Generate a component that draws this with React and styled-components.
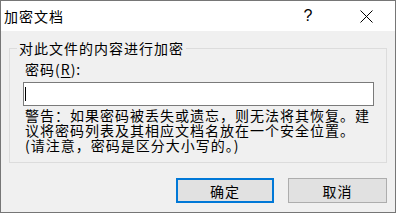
import React from 'react';
import styled, { createGlobalStyle } from 'styled-components';

const GlobalStyle = createGlobalStyle`
  html, body {
    margin: 0;
    padding: 0;
    background: #f0f0f0;
  }

  body {
    font-family: "Noto Sans CJK SC", "Noto Sans", sans-serif;
    color: #000;
  }
`;

const warningLines = [
  '警告：如果密码被丢失或遗忘，则无法将其恢复。建',
  '议将密码列表及其相应文档名放在一个安全位置。',
  '(请注意，密码是区分大小写的。)',
];

const App = () => {
  return (
    <>
      <GlobalStyle />
      <Window>
        <TitleBar>
          <Title>加密文档</Title>
          <CaptionButton>
            <HelpGlyph>?</HelpGlyph>
          </CaptionButton>
          <CaptionButton>
            <svg width="13" height="13" viewBox="0 0 13 13">
              <path d="M0.5 0.5 L12.5 12.5 M12.5 0.5 L0.5 12.5" stroke="#000" strokeWidth="1" fill="none" />
            </svg>
          </CaptionButton>
        </TitleBar>

        <GroupBox>
          <Legend>对此文件的内容进行加密</Legend>
          <FieldLabel>
            密码(<u>R</u>):
          </FieldLabel>
          <PasswordField>
            <Caret />
          </PasswordField>
          <Warning>
            {warningLines.map((line) => (
              <div key={line}>{line}</div>
            ))}
          </Warning>
        </GroupBox>

        <ButtonRow>
          <DialogButton $primary>确定</DialogButton>
          <DialogButton>取消</DialogButton>
        </ButtonRow>
      </Window>
    </>
  );
};

const Window = styled.div`
  box-sizing: border-box;
  display: flex;
  flex-direction: column;
  width: 396px;
  height: 213px;
  border: 1px solid #767676;
  background: #f0f0f0;
  overflow: hidden;
`;

const TitleBar = styled.div`
  display: flex;
  align-items: center;
  height: 30px;
  padding-left: 3px;
  background: #fff;
  flex-shrink: 0;
`;

const Title = styled.div`
  flex: 1;
  font-size: 14px;
  letter-spacing: 1px;
  line-height: 18px;
`;

const CaptionButton = styled.div`
  display: flex;
  align-items: center;
  justify-content: center;
  width: 57px;
  height: 30px;
`;

const HelpGlyph = styled.span`
  font-family: "Liberation Sans", Arial, sans-serif;
  font-size: 16px;
  line-height: 16px;
  margin-left: -3px;
`;

const GroupBox = styled.fieldset`
  margin: 8px 8px 0 8px;
  padding: 0 12px 9px 13px;
  border: 1px solid #dcdcdc;
  min-width: 0;
`;

const Legend = styled.legend`
  margin-left: -6px;
  padding: 0 2px;
  font-size: 14px;
  letter-spacing: 1px;
  line-height: 18px;
`;

const FieldLabel = styled.div`
  margin-top: 3px;
  padding-left: 2px;
  font-size: 14px;
  letter-spacing: 1px;
  line-height: 18px;

  u {
    text-underline-offset: 2px;
  }
`;

const PasswordField = styled.div`
  box-sizing: border-box;
  display: flex;
  align-items: center;
  height: 24px;
  margin-top: 4px;
  padding-left: 1px;
  border: 1px solid #7a7a7a;
  background: #fff;
`;

const Caret = styled.span`
  display: block;
  width: 1px;
  height: 14px;
  background: #000;
`;

const Warning = styled.div`
  margin-top: 2px;
  padding-left: 2px;
  font-size: 14px;
  letter-spacing: 1px;
  line-height: 15px;
  white-space: nowrap;
`;

const ButtonRow = styled.div`
  display: flex;
  justify-content: flex-end;
  gap: 14px;
  margin-top: 15px;
  padding-right: 8px;
`;

const DialogButton = styled.div`
  box-sizing: border-box;
  display: flex;
  align-items: center;
  justify-content: center;
  width: ${({ $primary }) => ($primary ? '98px' : '99px')};
  height: 25px;
  border: ${({ $primary }) => ($primary ? '2px solid #0078d7' : '1px solid #adadad')};
  background: #e1e1e1;
  font-size: 14px;
  letter-spacing: 1px;
  line-height: 18px;
`;

export default App;
